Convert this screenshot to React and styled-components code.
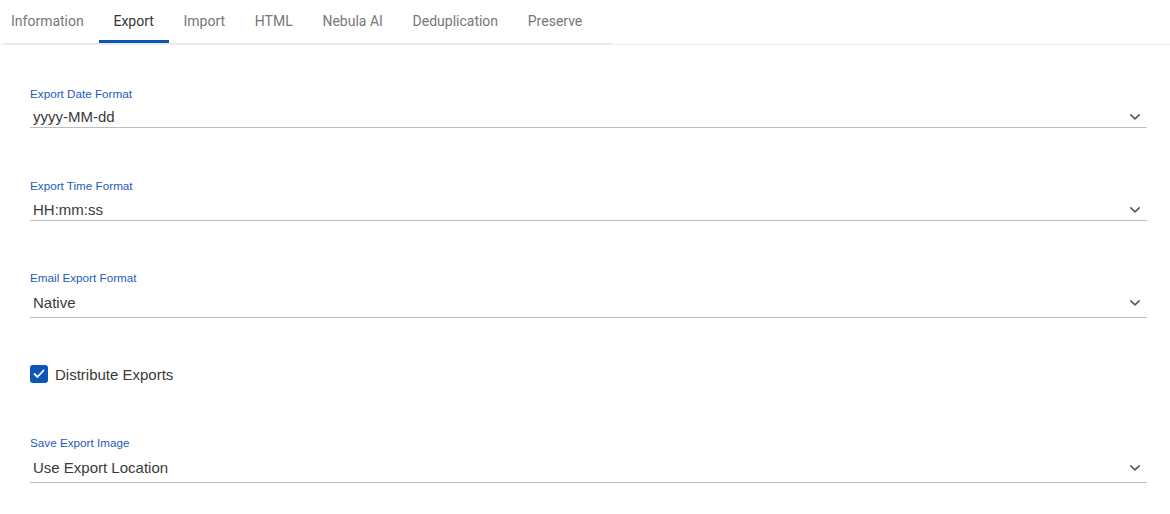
import React, { useState } from 'react';
import styled, { createGlobalStyle } from 'styled-components';

const GlobalStyle = createGlobalStyle`
  body {
    margin: 0;
    background: #ffffff;
    font-family: "Liberation Sans", Arial, sans-serif;
  }
`;

const Page = styled.div`
  width: 1170px;
  min-height: 514px;
  background: #fff;
`;

const Header = styled.div`
  display: flex;
  border-bottom: 1px solid #ececec;
  padding-left: 4px;
`;

const TabList = styled.nav`
  display: flex;
  width: 608px;
  border-bottom: 1px solid #e6e6e6;
  margin-bottom: -1px;
  transform: translateY(-1px);
`;

const Tab = styled.button`
  position: relative;
  border: 0;
  background: none;
  padding: 0 14.85px;
  height: 44px;
  font-family: Roboto, "Liberation Sans", sans-serif;
  font-size: 14px;
  color: ${p => (p.$active ? '#363636' : '#777777')};
  cursor: pointer;

  &:first-child {
    padding-left: 7px;
  }

  &::after {
    content: '';
    position: absolute;
    left: 0;
    right: 0;
    bottom: 0;
    height: 3px;
    background: ${p => (p.$active ? '#0b56b8' : 'transparent')};
  }
`;

const Form = styled.div`
  padding: 42px 23px 0 30px;
`;

const Field = styled.div`
  margin-top: ${p => p.$gap || 0}px;
`;

const Label = styled.div`
  font-size: 11.7px;
  line-height: 14px;
  color: #1d5cbc;
`;

const SelectRow = styled.div`
  display: flex;
  align-items: center;
  justify-content: space-between;
  padding: ${p => p.$top || 7}px 6px ${p => p.$bottom || 1}px 3px;
  border-bottom: 1px solid #bdbdbd;
  font-size: 15px;
  line-height: 18px;
  color: #3a3a3a;
`;

const Chevron = () => (
  <svg width="12" height="8" viewBox="0 0 12 8" fill="none">
    <path d="M1.8 1.8 L6 5.8 L10.2 1.8" stroke="#4f5a6b" strokeWidth="1.6" strokeLinecap="round" strokeLinejoin="round" />
  </svg>
);

const CheckRow = styled.label`
  display: flex;
  align-items: center;
  gap: 7px;
  margin-top: 47px;
  font-size: 15px;
  color: #3a3a3a;
`;

const Box = styled.span`
  width: 18px;
  height: 18px;
  border-radius: 3px;
  background: #0b56b8;
  display: flex;
  align-items: center;
  justify-content: center;
`;

const tabs = ['Information', 'Export', 'Import', 'HTML', 'Nebula AI', 'Deduplication', 'Preserve'];

const Select = ({ label, value, gap, top, bottom }) => (
  <Field $gap={gap}>
    <Label>{label}</Label>
    <SelectRow $top={top} $bottom={bottom}>
      <span>{value}</span>
      <Chevron />
    </SelectRow>
  </Field>
);

export default function App() {
  const [active, setActive] = useState('Export');

  return (
    <Page>
      <GlobalStyle />
      <Header>
        <TabList>
          {tabs.map(t => (
            <Tab key={t} $active={t === active} onClick={() => setActive(t)}>{t}</Tab>
          ))}
        </TabList>
      </Header>
      <Form>
        <Select label="Export Date Format" value="yyyy-MM-dd" />
        <Select label="Export Time Format" value="HH:mm:ss" gap={51} top={8} />
        <Select label="Email Export Format" value="Native" gap={50} top={9} bottom={5} />
        <CheckRow>
          <Box>
            <svg width="12" height="10" viewBox="0 0 12 10" fill="none">
              <path d="M1.5 5 L4.5 8 L10.5 1.5" stroke="#fff" strokeWidth="1.8" strokeLinecap="round" strokeLinejoin="round" />
            </svg>
          </Box>
          Distribute Exports
        </CheckRow>
        <Select label="Save Export Image" value="Use Export Location" gap={53} top={9} bottom={5} />
      </Form>
    </Page>
  );
}
